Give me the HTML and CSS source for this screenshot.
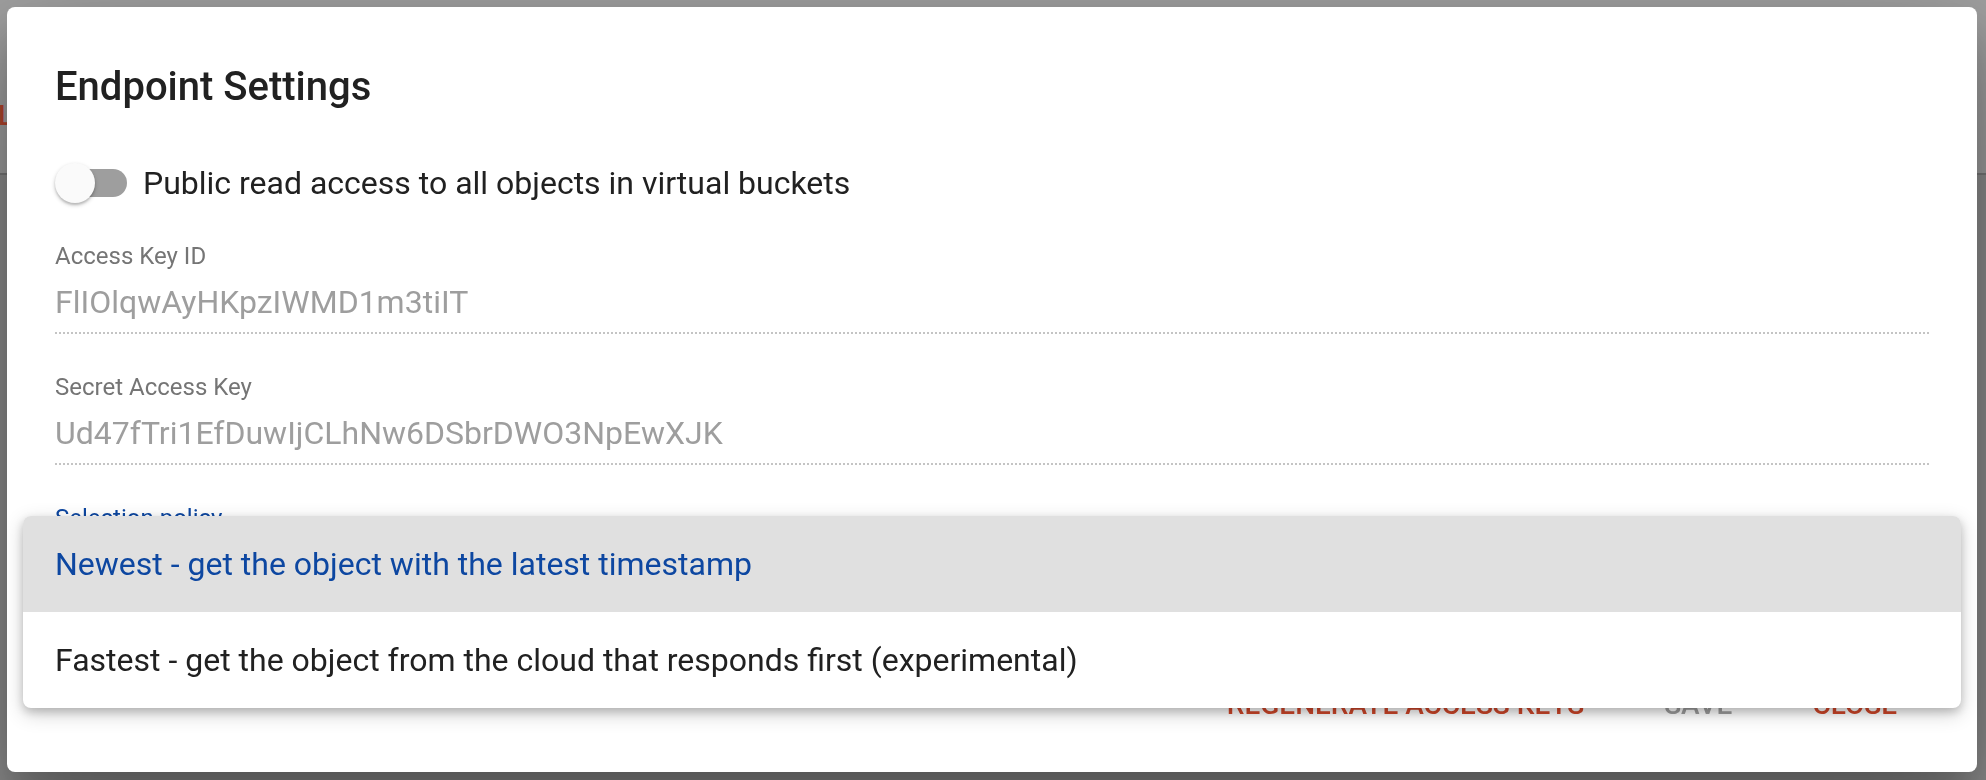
FILE: index.html
```html
<!DOCTYPE html>
<html lang="en">
<head>
<meta charset="utf-8">
<title>Endpoint Settings</title>
<link rel="stylesheet" href="styles.css">
</head>
<body>
<div class="page">
  <header class="appbar">
    <span class="appbar-link">LOGOUT</span>
  </header>
  <main class="page-body"></main>
</div>

<div class="dialog" role="dialog" aria-labelledby="dlg-title">
  <h2 class="dialog-title" id="dlg-title">Endpoint Settings</h2>

  <div class="dialog-content">
    <label class="toggle-row">
      <span class="toggle">
        <span class="toggle-track"></span>
        <span class="toggle-thumb"></span>
      </span>
      <span class="toggle-label">Public read access to all objects in virtual buckets</span>
    </label>

    <div class="field">
      <div class="field-label">Access Key ID</div>
      <div class="field-value">FlIOlqwAyHKpzIWMD1m3tiIT</div>
    </div>

    <div class="field">
      <div class="field-label">Secret Access Key</div>
      <div class="field-value">Ud47fTri1EfDuwIjCLhNw6DSbrDWO3NpEwXJK</div>
    </div>

    <div class="field field-focused">
      <div class="field-label">Selection policy</div>
      <div class="field-value">Newest - get the object with the latest timestamp</div>
    </div>
  </div>

  <div class="dialog-actions">
    <button class="btn btn-accent">Regenerate access keys</button>
    <button class="btn btn-disabled" disabled>Save</button>
    <button class="btn btn-accent">Close</button>
  </div>

  <ul class="menu" role="listbox">
    <li class="menu-item menu-item-selected" role="option">Newest - get the object with the latest timestamp</li>
    <li class="menu-item" role="option">Fastest - get the object from the cloud that responds first (experimental)</li>
  </ul>
</div>
</body>
</html>
```

FILE: styles.css
```css
* {
  box-sizing: border-box;
}

html, body {
  margin: 0;
  padding: 0;
  height: 100%;
}

body {
  font-family: Roboto, "Liberation Sans", Arial, sans-serif;
  background: #969696;
  overflow: hidden;
}

/* underlying page (already dimmed by the overlay) */
.page {
  height: 100%;
  display: flex;
  flex-direction: column;
}

.appbar {
  height: 175px;
  background: #9f9f9f;
  border-bottom: 2px solid #787878;
  display: flex;
  align-items: flex-end;
  padding-bottom: 43px;
}

.appbar-link {
  font-size: 28px;
  font-weight: 500;
  line-height: 28px;
  color: #b4442c;
  margin-left: -2px;
}

.page-body {
  flex: 1;
  background: #8e8e8e;
}

/* dialog */
.dialog {
  position: fixed;
  left: 7px;
  top: 7px;
  width: 1970px;
  height: 765px;
  background: #ffffff;
  border-radius: 8px;
  box-shadow: 0 38px 120px rgba(0, 0, 0, 0.30), 0 30px 40px rgba(0, 0, 0, 0.22);
  display: flex;
  flex-direction: column;
  padding: 0 48px;
}

.dialog-title {
  margin: 56px 0 0;
  font-size: 40px;
  line-height: 48px;
  font-weight: 500;
  color: #212121;
  letter-spacing: 0;
}

.dialog-content {
  display: flex;
  flex-direction: column;
}

.toggle-row {
  margin-top: 48px;
  height: 48px;
  display: flex;
  align-items: center;
}

.toggle {
  position: relative;
  width: 72px;
  height: 48px;
  flex: none;
  display: flex;
  align-items: center;
}

.toggle-track {
  margin-left: 4px;
  width: 68px;
  height: 28px;
  border-radius: 14px;
  background: #9e9e9e;
}

.toggle-thumb {
  position: absolute;
  left: 0;
  top: 4px;
  width: 40px;
  height: 40px;
  border-radius: 50%;
  background: #fafafa;
  box-shadow: 0 2px 4px rgba(0, 0, 0, 0.22), 0 2px 2px rgba(0, 0, 0, 0.12);
}

.toggle-label {
  margin-left: 16px;
  font-size: 32px;
  line-height: 48px;
  color: #212121;
}

.field {
  display: flex;
  flex-direction: column;
  border-bottom: 2px dotted #c4c4c4;
  padding-bottom: 10px;
}

.field:first-of-type {
  margin-top: 35px;
}

.field + .field {
  margin-top: 39px;
}

.field-label {
  font-size: 24px;
  line-height: 28px;
  color: #757575;
}

.field-value {
  margin-top: 12px;
  font-size: 32px;
  line-height: 40px;
  color: #9e9e9e;
}

.field-focused .field-label {
  color: #0d47a1;
}

.field-focused .field-value {
  color: #212121;
}

.dialog-actions {
  margin-top: auto;
  margin-bottom: 31px;
  display: flex;
  justify-content: flex-end;
  align-items: center;
  gap: 16px;
  padding-right: 0;
}

.btn {
  font-family: inherit;
  font-size: 28px;
  font-weight: 500;
  text-transform: uppercase;
  line-height: 72px;
  height: 72px;
  padding: 0 32px;
  border: 0;
  background: transparent;
  border-radius: 4px;
  cursor: pointer;
}

.btn-accent {
  color: #d2472a;
}

.btn-disabled {
  color: #9e9e9e;
}

/* open select menu */
.menu {
  position: absolute;
  left: 16px;
  top: 509px;
  width: 1938px;
  margin: 0;
  padding: 0;
  list-style: none;
  background: #ffffff;
  border-radius: 8px;
  overflow: hidden;
  box-shadow: 0 6px 20px rgba(0, 0, 0, 0.19), 0 4px 8px rgba(0, 0, 0, 0.18);
}

.menu-item {
  height: 96px;
  line-height: 96px;
  padding: 0 32px;
  font-size: 32px;
  color: #212121;
  white-space: nowrap;
}

.menu-item-selected {
  background: #e0e0e0;
  color: #0d47a1;
}
```
